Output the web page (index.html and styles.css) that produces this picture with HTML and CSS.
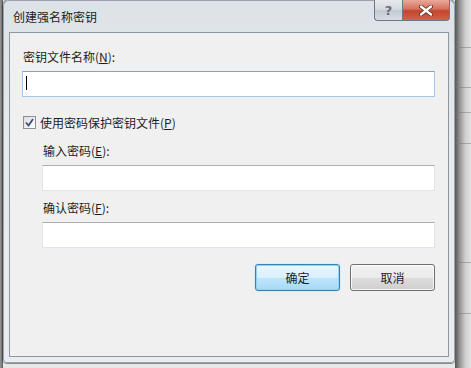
FILE: index.html
```html
<!DOCTYPE html>
<html>
<head>
    <meta charset="UTF-8">
    <title>创建强名称密钥</title>
    <link rel="stylesheet" href="styles.css">
</head>
<body>
    <!-- 바탕 화면 -->
    <div class="desktop">
        <div class="side-left"></div>

        <!-- 대화 상자 -->
        <div class="window">
            <div class="title-bar">
                <span class="title">创建强名称密钥</span>
                <div class="caption-buttons">
                    <div class="cap-btn help">?</div>
                    <div class="cap-btn close">
                        <svg width="14" height="11" viewBox="0 0 14 11">
                            <path d="M2 1.5 L12 9.5 M12 1.5 L2 9.5" stroke="#5a2a22" stroke-width="4" stroke-linecap="round"/>
                            <path d="M2 1.5 L12 9.5 M12 1.5 L2 9.5" stroke="#fff" stroke-width="2.4" stroke-linecap="round"/>
                        </svg>
                    </div>
                </div>
            </div>

            <div class="client">
                <label class="field-label">密钥文件名称(<u>N</u>):</label>
                <div class="textbox focused"><span class="caret"></span></div>

                <div class="check-row">
                    <span class="checkbox">
                        <svg width="9" height="9" viewBox="0 0 9 9">
                            <path d="M1 4.5 L3.5 7.5 L8 1" fill="none" stroke="#3a4f8a" stroke-width="1.8"/>
                        </svg>
                    </span>
                    <span>使用密码保护密钥文件(<u>P</u>)</span>
                </div>

                <div class="sub-group">
                    <label class="field-label">输入密码(<u>E</u>):</label>
                    <div class="textbox"></div>
                    <label class="field-label second">确认密码(<u>F</u>):</label>
                    <div class="textbox"></div>
                </div>

                <div class="button-row">
                    <div class="push default">确定</div>
                    <div class="push">取消</div>
                </div>
            </div>
        </div>

        <!-- 오른쪽 배경 -->
        <div class="side-right">
            <div class="line" style="top: 47px"></div>
            <div class="line" style="top: 87px"></div>
            <div class="line" style="top: 112px"></div>
            <div class="line" style="top: 143px"></div>
            <div class="line" style="top: 262px"></div>
            <div class="line" style="top: 313px"></div>
        </div>
    </div>
</body>
</html>
```

FILE: styles.css
```css
/* 전체 */
body {
    margin: 0;
    padding: 0;
    width: 471px;
    height: 368px;
    overflow: hidden;
    background: #e8e8e8;
    font-family: "Noto Sans CJK SC", "Microsoft YaHei", sans-serif;
    font-size: 12px;
    color: #1e1e1e;
}

.desktop {
    display: flex;
    height: 368px;
}

.side-left {
    width: 3px;
    background: linear-gradient(to right, #9a9a9a, #5c5c5c);
}

.side-right {
    flex: 1;
    position: relative;
    background: linear-gradient(to right, #555 0%, #959595 30%, #cfcfcf 65%, #e2e2e2 100%);
}

.side-right .line {
    position: absolute;
    left: 0;
    right: 0;
    height: 1px;
    background: rgba(120, 120, 120, 0.5);
}

/* 창 */
.window {
    width: 440px;
    height: 357px;
    padding: 0 6px 6px 6px;
    border-radius: 6px 6px 4px 4px;
    background: linear-gradient(to bottom, #dde2e8 0%, #e6eaee 40%, #e9ecf0 100%);
    box-shadow: inset 0 0 0 1px #9ba4ae, 0 0 0 1px rgba(40, 40, 40, 0.5);
    display: flex;
    flex-direction: column;
}

.title-bar {
    height: 32px;
    display: flex;
    position: relative;
}

.title {
    padding-left: 4px;
    line-height: 34px;
    font-size: 12px;
    color: #222;
}

.caption-buttons {
    position: absolute;
    top: 0;
    right: -1px;
    display: flex;
}

.cap-btn {
    height: 20px;
    display: flex;
    justify-content: center;
    align-items: center;
    border: 1px solid #6f7780;
    border-top: none;
}

.cap-btn.help {
    width: 27px;
    border-radius: 0 0 0 4px;
    border-right: none;
    background: linear-gradient(to bottom, #e6eaef 0%, #d2d8df 50%, #c2c9d1 51%, #d6dce2 100%);
    color: #6a6e74;
    font-family: "DejaVu Sans", sans-serif;
    font-weight: bold;
    font-size: 13px;
}

.cap-btn.close {
    width: 46px;
    border-radius: 0 0 4px 0;
    background: linear-gradient(to bottom, #e9a99a 0%, #d6705c 45%, #c4452c 55%, #d4614a 100%);
}

/* 본문 */
.client {
    height: 323px;
    border: 1px solid #8d97a1;
    background: #f0f0f0;
    padding-left: 12px;
    padding-right: 13px;
    display: flex;
    flex-direction: column;
}

.field-label {
    display: block;
    height: 16px;
    line-height: 16px;
    margin-top: 16px;
    margin-left: 1px;
}

.textbox {
    height: 24px;
    margin-top: 6px;
    background: #fff;
    border: 1px solid #e2e3ea;
    border-top-color: #abadb3;
    position: relative;
}

.textbox.focused {
    border-color: #a6c8e4;
    border-top-color: #7aa7cf;
}

.caret {
    position: absolute;
    left: 3px;
    top: 4px;
    width: 1px;
    height: 14px;
    background: #000;
}

.check-row {
    display: flex;
    align-items: center;
    gap: 4px;
    margin-top: 18px;
    margin-left: 1px;
    height: 14px;
}

.checkbox {
    width: 11px;
    height: 11px;
    border: 1px solid #8e8f8f;
    background: linear-gradient(135deg, #dcdcdc, #fff);
    display: flex;
    justify-content: center;
    align-items: center;
}

.sub-group {
    margin-left: 20px;
    display: flex;
    flex-direction: column;
}

.sub-group .field-label {
    margin-top: 14px;
}

.sub-group .field-label.second {
    margin-top: 9px;
}

/* 버튼 */
.button-row {
    display: flex;
    justify-content: flex-end;
    gap: 10px;
    margin-top: 16px;
}

.push {
    width: 83px;
    height: 25px;
    border: 1px solid #707070;
    border-radius: 3px;
    background: linear-gradient(to bottom, #f2f2f2 0%, #ebebeb 50%, #dddddd 51%, #cfcfcf 100%);
    box-shadow: inset 0 0 0 1px rgba(255, 255, 255, 0.8);
    display: flex;
    justify-content: center;
    align-items: center;
}

.push.default {
    border-color: #3c7fb1;
    background: linear-gradient(to bottom, #eaf6fd 0%, #d9f0fc 50%, #bee6fd 51%, #a7d9f5 100%);
    box-shadow: inset 0 0 0 1px #8fd3f8, 0 0 1px #5fb4e8;
}
```
